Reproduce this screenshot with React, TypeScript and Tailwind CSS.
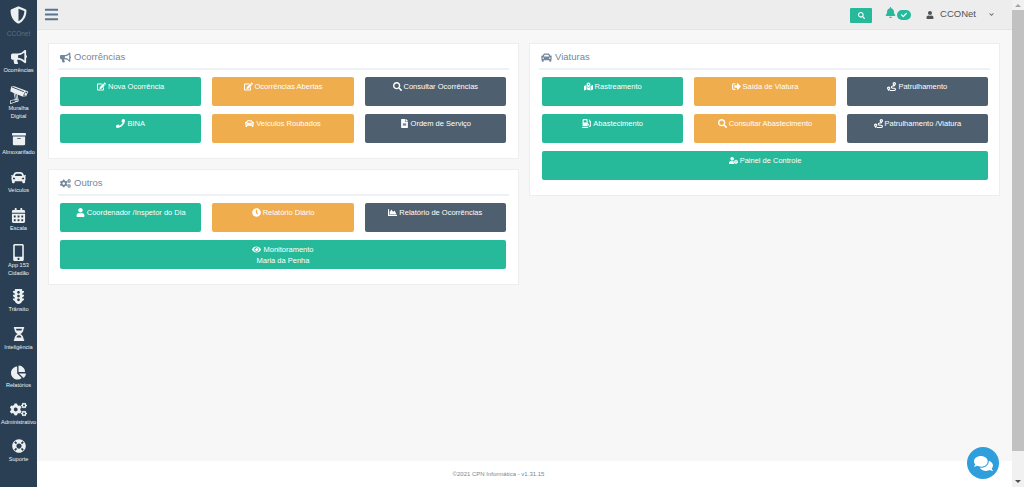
import React from "react";
import {
  FaShieldAlt, FaBullhorn, FaArchive, FaCar, FaCalendarAlt, FaMobileAlt, FaTrafficLight, FaHourglassHalf,
  FaChartPie, FaCogs, FaLifeRing, FaEdit, FaSearch, FaPhone, FaFileAlt, FaUser, FaClock, FaChartArea, FaEye,
  FaMapMarkedAlt, FaSignOutAlt, FaRoute, FaGasPump, FaUserCog, FaBell, FaComments, FaBars, FaCheck, FaChevronDown,
} from "react-icons/fa";
import { GiCctvCamera } from "react-icons/gi";

type IconT = React.ComponentType<{ className?: string }>;

function NavItem({ icon: Icon, lines, size = "text-[17px]", mt }: { icon: IconT; lines: string[]; size?: string; mt: string }) {
  return (
    <div className={`flex flex-col items-center ${mt}`}>
      <div className="h-[18px] flex items-center justify-center">
        <Icon className={size} />
      </div>
      <div className="text-[5.6px] leading-[8px] text-center whitespace-nowrap">
        {lines.map((l) => (
          <div key={l}>{l}</div>
        ))}
      </div>
    </div>
  );
}

const tone = {
  g: "bg-[#26b99a]",
  o: "bg-[#f0ad4e]",
  d: "bg-[#4e5f70]",
};

function Btn({ icon: Icon, text, c, wide, second }: { icon: IconT; text: string; c: keyof typeof tone; wide?: boolean; second?: string }) {
  return (
    <div className={`${tone[c]} ${wide ? "col-span-3" : ""} h-[29px] rounded-[2px] pt-[4px] text-center text-white text-[7.5px] leading-[11px]`}>
      <div className="flex items-center justify-center gap-[2px]">
        <Icon className="text-[9px]" />
        <span>{text}</span>
      </div>
      {second && <div>{second}</div>}
    </div>
  );
}

function Panel({ icon: Icon, title, grid, children }: { icon: IconT; title: string; grid: string; children: React.ReactNode }) {
  return (
    <section className="bg-white border border-[#eeeeee] px-[9px] pb-[15px]">
      <div className="h-[26px] pt-[2px] border-b-2 border-[#eef2f7] flex items-center gap-[3px] px-[2px] text-[#73879c] text-[9.5px]">
        <Icon className="text-[11px]" />
        <span>{title}</span>
      </div>
      <div className={`grid grid-cols-3 gap-x-[11px] gap-y-[8px] pt-[7px] ${grid}`}>{children}</div>
    </section>
  );
}

export default function App() {
  return (
    <div className="relative flex h-screen overflow-hidden bg-[#f7f7f7] text-[#73879c] font-['Liberation_Sans',Arial,sans-serif]">
      <aside className="w-[37px] shrink-0 bg-[#2a3f54] text-[#ecf0f1] flex flex-col items-center pt-[5px]">
        <div className="flex flex-col items-center">
          <FaShieldAlt className="text-[17px] h-[20px]" />
          <div className="mt-[5px] text-[6.5px] leading-[8px] text-[#5b6f82]">CCOnet</div>
        </div>
        <NavItem icon={FaBullhorn} lines={["Ocorrências"]} mt="mt-[10px]" size="text-[16px]" />
        <NavItem icon={GiCctvCamera} lines={["Muralha", "Digital"]} mt="mt-[12px]" size="text-[20px]" />
        <NavItem icon={FaArchive} lines={["Almoxarifado"]} mt="mt-[10px]" size="text-[14px]" />
        <NavItem icon={FaCar} lines={["Veículos"]} mt="mt-[12px]" size="text-[15px]" />
        <NavItem icon={FaCalendarAlt} lines={["Escala"]} mt="mt-[12px]" size="text-[15px]" />
        <NavItem icon={FaMobileAlt} lines={["App 153", "Cidadão"]} mt="mt-[11px]" size="text-[17px]" />
        <NavItem icon={FaTrafficLight} lines={["Trânsito"]} mt="mt-[10px]" size="text-[15px]" />
        <NavItem icon={FaHourglassHalf} lines={["Inteligência"]} mt="mt-[12px]" size="text-[14px]" />
        <NavItem icon={FaChartPie} lines={["Relatórios"]} mt="mt-[12px]" size="text-[15px]" />
        <NavItem icon={FaCogs} lines={["Administrativo"]} mt="mt-[11px]" size="text-[17px]" />
        <NavItem icon={FaLifeRing} lines={["Suporte"]} mt="mt-[11px]" size="text-[14px]" />
      </aside>

      <div className="flex-1 flex flex-col min-w-0">
        <header className="h-[30px] shrink-0 bg-[#ededed] border-b border-[#e4e4e4] flex items-center pl-[7px]">
          <FaBars className="text-[#5a738e] text-[15px]" />
          <div className="ml-auto flex items-center pr-[18px]">
            <div className="mt-[2px] w-[22px] h-[15px] rounded-[1px] bg-[#26b99a] text-white flex items-center justify-center">
              <FaSearch className="text-[7px]" />
            </div>
            <div className="ml-[13px] flex items-start">
              <FaBell className="text-[#26b99a] text-[11px] -mt-[2px]" />
              <div className="ml-[1px] mt-[1px] w-[14px] h-[10px] rounded-full bg-[#26b99a] text-white flex items-center justify-center">
                <FaCheck className="text-[6px]" />
              </div>
            </div>
            <FaUser className="ml-[15px] text-[#515356] text-[8px]" />
            <span className="ml-[6px] text-[#515356] text-[9.5px]">CCONet</span>
            <FaChevronDown className="ml-[13px] text-[#515356] text-[5px]" />
          </div>
        </header>

        <main className="flex-1 min-h-0 flex gap-[10px] pl-[11px] pr-[12px] pt-[13px] items-start">
          <div className="flex-1 flex flex-col gap-[10px] min-w-0">
            <Panel icon={FaBullhorn} title="Ocorrências" grid="pl-[2px] pr-[3px]">
              <Btn icon={FaEdit} text="Nova Ocorrência" c="g" />
              <Btn icon={FaEdit} text="Ocorrências Abertas" c="o" />
              <Btn icon={FaSearch} text="Consultar Ocorrências" c="d" />
              <Btn icon={FaPhone} text="BINA" c="g" />
              <Btn icon={FaCar} text="Veículos Roubados" c="o" />
              <Btn icon={FaFileAlt} text="Ordem de Serviço" c="d" />
            </Panel>
            <Panel icon={FaCogs} title="Outros" grid="pl-[2px] pr-[3px]">
              <Btn icon={FaUser} text="Coordenador /Inspetor do Dia" c="g" />
              <Btn icon={FaClock} text="Relatório Diário" c="o" />
              <Btn icon={FaChartArea} text="Relatório de Ocorrências" c="d" />
              <Btn icon={FaEye} text="Monitoramento" second="Maria da Penha" c="g" wide />
            </Panel>
          </div>
          <div className="flex-1 min-w-0">
            <Panel icon={FaCar} title="Viaturas" grid="pl-[3px] pr-[2px]">
              <Btn icon={FaMapMarkedAlt} text="Rastreamento" c="g" />
              <Btn icon={FaSignOutAlt} text="Saída de Viatura" c="o" />
              <Btn icon={FaRoute} text="Patrulhamento" c="d" />
              <Btn icon={FaGasPump} text="Abastecimento" c="g" />
              <Btn icon={FaSearch} text="Consultar Abastecimento" c="o" />
              <Btn icon={FaRoute} text="Patrulhamento /Viatura" c="d" />
              <Btn icon={FaUserCog} text="Painel de Controle" c="g" wide />
            </Panel>
          </div>
        </main>

        <footer className="h-[26px] shrink-0 bg-white flex items-center justify-center pt-[1px] pr-[52px] text-[6px] text-[#73879c]">
          ©2021 CPN Informática - v1.31.15
        </footer>
      </div>

      <div className="w-[12px] shrink-0 bg-[#f1f1f1] flex flex-col items-center">
        <div className="h-[10px] flex items-center justify-center">
          <div className="border-x-[3px] border-x-transparent border-b-[3px] border-b-[#a3a3a3]" />
        </div>
        <div className="w-full h-[441px] bg-[#c1c1c1]" />
        <div className="mt-auto h-[11px] flex items-center justify-center">
          <div className="border-x-[3px] border-x-transparent border-t-[3px] border-t-[#505050]" />
        </div>
      </div>

      <div className="absolute left-[967px] top-[447px] w-[32px] h-[32px] rounded-full bg-[#2e9fdc] text-white flex items-center justify-center">
        <FaComments className="text-[19px]" />
      </div>
    </div>
  );
}
